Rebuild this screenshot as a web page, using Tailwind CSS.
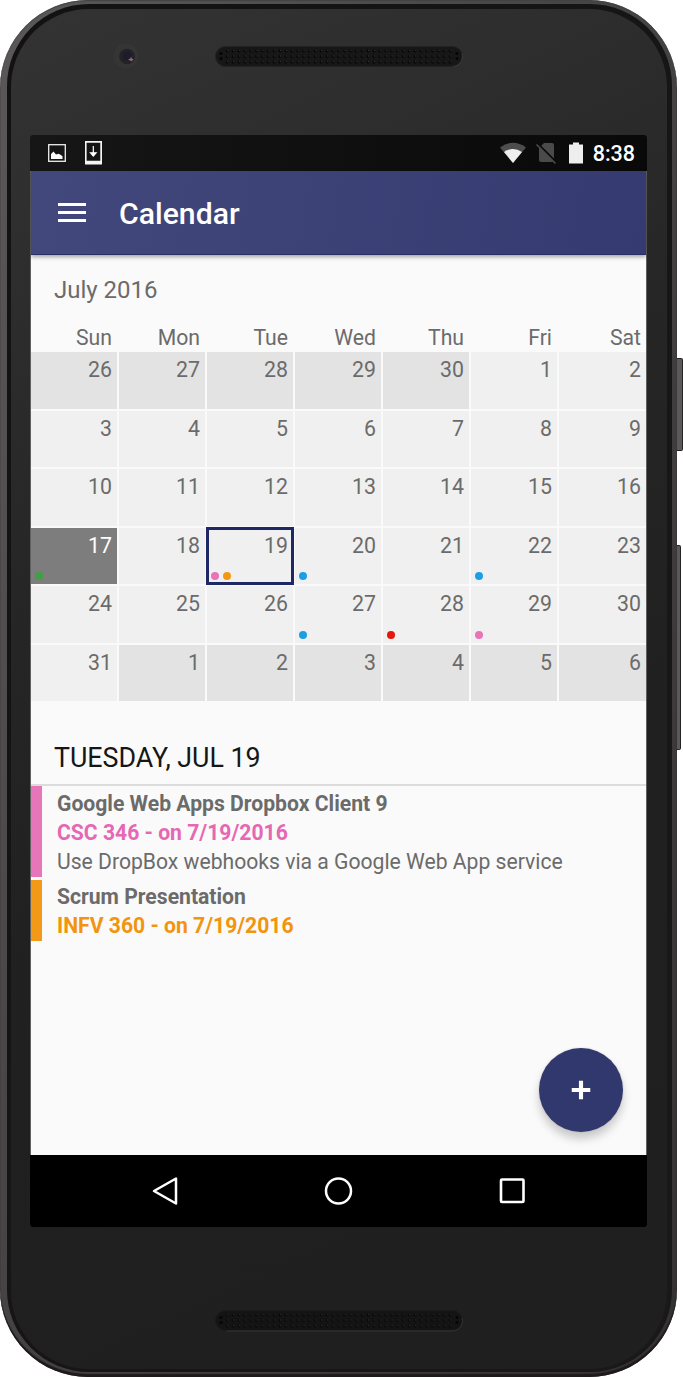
<!DOCTYPE html>
<html lang="en">
<head>
<meta charset="utf-8">
<title>Calendar</title>
<script src="https://cdn.jsdelivr.net/npm/@tailwindcss/browser@4"></script>
</head>
<body class="bg-white font-[Roboto,sans-serif] antialiased">
<div class="relative h-[1377px] w-[683px] overflow-hidden">
  <!-- side buttons -->
  <div class="absolute top-[358px] left-[675px] h-[93px] w-[8px] rounded-r-xs border-y border-r border-[#252324] bg-[#5b595a]"></div>
  <div class="absolute top-[545px] left-[675px] h-[205px] w-[6px] rounded-r-xs border-y border-r border-[#252324] bg-[#5b595a]"></div>

  <!-- phone body -->
  <div class="relative h-[1377px] w-[677px] rounded-[88px] bg-linear-to-br from-[#5a5859] via-[#444243] to-[#343132] pt-[4px] pr-[5px] pb-[5px] pl-[7px] shadow-[inset_0_-3px_1px_#1e1a1b,inset_0_1px_1px_#444243]">
    <div class="h-full rounded-[82px] bg-linear-to-br from-[#121212] to-[#1a1919] pt-[5px] pr-[5px] pb-[3px] pl-[4px]">
      <div class="flex h-full flex-col rounded-[78px] bg-[linear-gradient(155deg,#333333_0%,#2d2d2d_18%,#262626_35%,#202020_60%,#1f1f1f_100%)] pl-[19px]">
        <!-- camera and earpiece -->
        <div class="flex h-[126px] shrink-0 items-start">
          <svg class="mt-[34px] ml-[83px] shrink-0" width="26" height="26" viewBox="0 0 26 26">
            <circle cx="13" cy="13" r="12.5" fill="#363535"/><circle cx="14" cy="13.5" r="7.8" fill="#232229"/><circle cx="14.500" cy="13" r="4.5" fill="#1d1c29"/>
            <path d="M15 16.500l2.500-1 .5-2 1 2.200 1.500.8-2 1.800z" fill="#a06a6c"/>
          </svg>
          <svg class="mt-[37px] ml-[76px] shrink-0" width="248" height="21" viewBox="0 0 248 21">
            <defs>
              <pattern id="holes" width="5.870" height="5.700" patternUnits="userSpaceOnUse" x="9.200" y="2">
                <circle cx="3" cy="2.800" r="1.500" fill="#050505"/><circle cx="3.600" cy="2.200" r=".6" fill="#484848"/>
              </pattern>
            </defs>
            <rect x=".5" y=".5" width="247" height="20" rx="10" fill="#171717" stroke="#222"/>
            <rect x="9.200" y="2" width="229" height="17.100" fill="url(#holes)"/>
            <circle cx="6" cy="7.500" r="1.500" fill="#050505"/><circle cx="6" cy="12.500" r="1.500" fill="#050505"/>
            <circle cx="242" cy="7.500" r="1.500" fill="#050505"/><circle cx="242" cy="12.500" r="1.500" fill="#050505"/>
            <path d="M238 20.500a10 10 0 0 0 9-13" fill="none" stroke="#444" stroke-width=".8"/>
          </svg>
        </div>

        <!-- screen -->
        <div class="relative flex h-[1092px] w-[617px] shrink-0 flex-col overflow-hidden rounded-[2px] bg-[#606060]">
          <!-- status bar -->
          <div class="flex h-[36px] shrink-0 items-center bg-linear-to-r from-[#161616] to-[#090909] pr-[12px] pl-[17px] text-white">
            <svg width="20" height="20" viewBox="0 0 20 20"><rect x="1.700" y="1.700" width="16.600" height="16.600" fill="none" stroke="#eee" stroke-width="1.300"/><path d="M4 16v-5l2.500-2.500L9 11.500l2.500-.7 2 .9 2 1.500V16z" fill="#fff"/></svg>
            <svg class="ml-[17px]" width="18" height="26" viewBox="0 0 18 26"><path fill="#f5f5f5" fill-rule="evenodd" d="M1 1h17v23.500H1zM2.600 2.700v18h13.700v-18z"/><path d="M9.300 6v9M6.500 12.800l2.800 3.200 2.800-3.200z" stroke="#fff" stroke-width="1.200" fill="#fff"/></svg>
            <svg class="ml-auto" width="28" height="24" viewBox="0 0 28 24"><path d="M1 6.500Q14-2.800 27 6.500L14 22z" fill="#4d4d4d"/><path d="M5 11Q14 5 23 11L14 22z" fill="#eee"/></svg>
            <svg class="ml-[8px]" width="22" height="24" viewBox="0 0 22 24"><path d="M9 2h8a2 2 0 0 1 2 2v15a2 2 0 0 1-2 2H6a2 2 0 0 1-2-2V7z" fill="#4a4a4a"/><path d="M2.500 2.500l19 19" stroke="#0a0a0a" stroke-width="2"/><path d="M1.500 3.500l19 19" stroke="#4a4a4a" stroke-width="1.700"/></svg>
            <svg class="ml-[11px]" width="16" height="24" viewBox="0 0 16 24"><path d="M1 3.500h4V1.500h6v2h4V22.500H1z" fill="#eee"/></svg>
            <span class="ml-[9px] pt-[2px] text-[21.500px] leading-[34px] font-medium">8:38</span>
          </div>
          <!-- app bar -->
          <div class="relative z-10 mx-px flex h-[84px] shrink-0 items-center border-b border-[#2a3065] bg-[linear-gradient(100deg,#42487b,#353b70)] pl-[27px] shadow-[0_2px_4px_rgba(0,0,0,.35)]">
            <div class="flex w-[28px] flex-col gap-[5px]"><i class="h-[3px] bg-white"></i><i class="h-[3px] bg-white"></i><i class="h-[3px] bg-white"></i></div>
            <h1 class="ml-[33px] pt-[2px] text-[30.200px] leading-[36px] font-medium text-white">Calendar</h1>
          </div>
          <!-- calendar -->
          <main class="mx-px flex h-[900px] shrink-0 flex-col bg-[#fafafa] text-[#6b6b6b]">
            <h2 class="mt-[17px] ml-[23px] text-[24px] leading-[36px]">July 2016</h2>
            <div class="mt-[12px] grid w-[615px] grid-cols-[repeat(6,86px)_87px] gap-x-[2px] text-right text-[21.200px] leading-[36px] *:pr-[5px]">
              <div>Sun</div><div>Mon</div><div>Tue</div><div>Wed</div><div>Thu</div><div>Fri</div><div>Sat</div>
            </div>
            <div class="-mt-[4px] grid h-[349px] w-[615px] shrink-0 grid-cols-[repeat(6,86px)_87px] grid-rows-6 gap-[2px] text-right text-[21.300px] leading-[36px] *:relative *:pr-[5px]">
              <div class="bg-[#e3e3e3]">26</div><div class="bg-[#e3e3e3]">27</div><div class="bg-[#e3e3e3]">28</div><div class="bg-[#e3e3e3]">29</div><div class="bg-[#e3e3e3]">30</div><div class="bg-[#f0f0f0]">1</div><div class="bg-[#f0f0f0]">2</div>
              <div class="bg-[#f0f0f0]">3</div><div class="bg-[#f0f0f0]">4</div><div class="bg-[#f0f0f0]">5</div><div class="bg-[#f0f0f0]">6</div><div class="bg-[#f0f0f0]">7</div><div class="bg-[#f0f0f0]">8</div><div class="bg-[#f0f0f0]">9</div>
              <div class="bg-[#f0f0f0]">10</div><div class="bg-[#f0f0f0]">11</div><div class="bg-[#f0f0f0]">12</div><div class="bg-[#f0f0f0]">13</div><div class="bg-[#f0f0f0]">14</div><div class="bg-[#f0f0f0]">15</div><div class="bg-[#f0f0f0]">16</div>
              <div class="bg-[#7d7d7d] text-white">17<i class="absolute bottom-[4px] left-[4px] size-[8px] rounded-full bg-[#3fa142]"></i></div><div class="bg-[#f0f0f0]">18</div><div class="bg-[#f0f0f0] outline-3 -outline-offset-2 outline-[#1f2865]">19<i class="absolute bottom-[4px] left-[4px] size-[8px] rounded-full bg-[#e873b9]"></i><i class="absolute bottom-[4px] left-[16px] size-[8px] rounded-full bg-[#f39814]"></i></div><div class="bg-[#f0f0f0]">20<i class="absolute bottom-[4px] left-[4px] size-[8px] rounded-full bg-[#1b9fe4]"></i></div><div class="bg-[#f0f0f0]">21</div><div class="bg-[#f0f0f0]">22<i class="absolute bottom-[4px] left-[4px] size-[8px] rounded-full bg-[#1b9fe4]"></i></div><div class="bg-[#f0f0f0]">23</div>
              <div class="bg-[#f0f0f0]">24</div><div class="bg-[#f0f0f0]">25</div><div class="bg-[#f0f0f0]">26</div><div class="bg-[#f0f0f0]">27<i class="absolute bottom-[4px] left-[4px] size-[8px] rounded-full bg-[#1b9fe4]"></i></div><div class="bg-[#f0f0f0]">28<i class="absolute bottom-[4px] left-[4px] size-[8px] rounded-full bg-[#e8170c]"></i></div><div class="bg-[#f0f0f0]">29<i class="absolute bottom-[4px] left-[4px] size-[8px] rounded-full bg-[#e873b9]"></i></div><div class="bg-[#f0f0f0]">30</div>
              <div class="bg-[#f0f0f0]">31</div><div class="bg-[#e3e3e3]">1</div><div class="bg-[#e3e3e3]">2</div><div class="bg-[#e3e3e3]">3</div><div class="bg-[#e3e3e3]">4</div><div class="bg-[#e3e3e3]">5</div><div class="bg-[#e3e3e3]">6</div>
            </div>
            <!-- agenda -->
            <h3 class="mt-[39px] flex h-[46px] shrink-0 items-start border-b-2 border-[#dcdcdc] pl-[23px] text-[26.800px] leading-[36px] text-[#161616]">TUESDAY, JUL 19</h3>
            <section class="flex h-[91px] shrink-0 border-l-[11px] border-[#e676b9] pl-[15px] text-[21.150px] leading-[29px]">
              <div class="pt-[3px]"><p class="font-bold">Google Web Apps Dropbox Client 9</p><p class="font-bold text-[#e667b3]">CSC 346 - on 7/19/2016</p><p>Use DropBox webhooks via a Google Web App service</p></div>
            </section>
            <section class="mt-[3px] flex h-[61px] shrink-0 border-l-[11px] border-[#f29a18] pl-[15px] text-[21.150px] leading-[29px]">
              <div class="pt-[2px]"><p class="font-bold">Scrum Presentation</p><p class="font-bold text-[#f1940e]">INFV 360 - on 7/19/2016</p></div>
            </section>
          </main>
          <!-- floating action button -->
          <button aria-label="Add" class="absolute top-[913px] left-[509px] flex size-[84px] items-center justify-center rounded-full bg-[#30386d] shadow-[0_7px_10px_rgba(0,0,0,.2),0_0_2px_rgba(0,0,0,.15)]">
            <svg width="20" height="20" viewBox="0 0 20 20"><path d="M10 2v16M2 10h16" stroke="#fff" stroke-width="4.600" stroke-linecap="square" transform="translate(1 1) scale(.9)"/></svg>
          </button>
          <!-- navigation bar -->
          <nav class="mt-auto flex h-[72px] shrink-0 items-center bg-black pl-[121px]">
            <svg width="28" height="30" viewBox="0 0 28 30"><path d="M25 2.500v25L3 15z" fill="none" stroke="#fff" stroke-width="2.500" stroke-linejoin="round"/></svg>
            <svg class="ml-[145px]" width="30" height="30" viewBox="0 0 30 30"><circle cx="14.500" cy="15" r="12.500" fill="none" stroke="#fff" stroke-width="2.500"/></svg>
            <svg class="ml-[145px]" width="28" height="28" viewBox="0 0 28 28"><rect x="2" y="2.500" width="22.500" height="22.500" rx="1" fill="none" stroke="#fff" stroke-width="2.600"/></svg>
          </nav>
        </div>

        <!-- bottom speaker -->
        <svg class="mt-[83px] ml-[185px] shrink-0" width="248" height="22" viewBox="0 0 248 22">
          <rect x=".5" y=".5" width="247" height="20" rx="10" fill="#141414" stroke="#1b1b1b"/>
          <rect x="9.200" y="2" width="229" height="17.100" fill="url(#holes)" opacity=".75"/>
          <circle cx="6" cy="7.500" r="1.500" fill="#050505"/><circle cx="6" cy="12.500" r="1.500" fill="#050505"/>
          <circle cx="242" cy="7.500" r="1.500" fill="#050505"/><circle cx="242" cy="12.500" r="1.500" fill="#050505"/>
          <path d="M12 21h226a10 10 0 0 0 9-13" fill="none" stroke="#3b3b3b" stroke-width=".8"/>
        </svg>
      </div>
    </div>
  </div>
</div>
</body>
</html>
